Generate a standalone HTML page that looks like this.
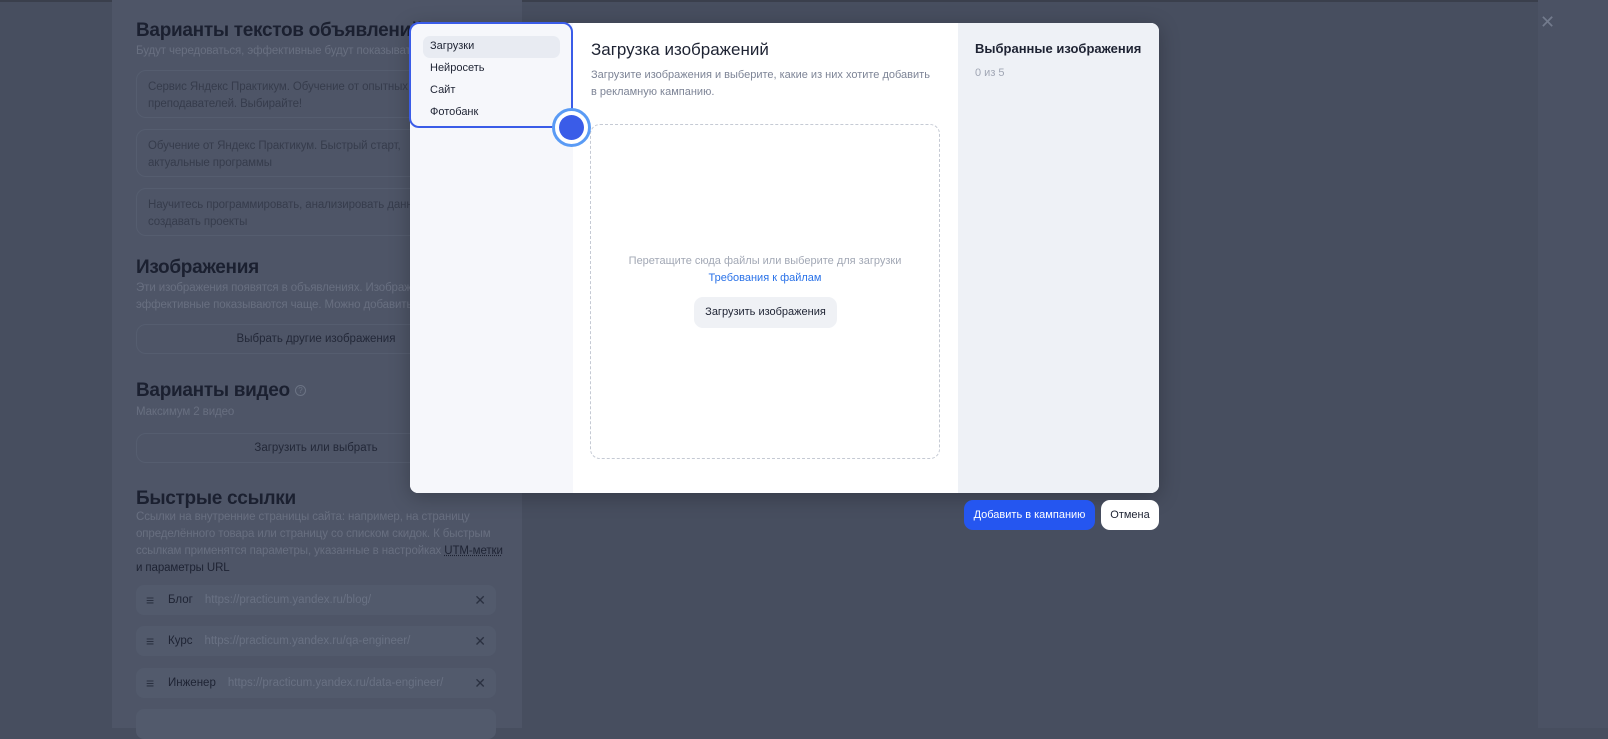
<!DOCTYPE html>
<html><head><meta charset="utf-8"><style>
*{box-sizing:border-box;margin:0;padding:0}
body{width:1608px;height:728px;overflow:hidden;background:#474e5f;font-family:"Liberation Sans",sans-serif;position:relative}
.abs{position:absolute}
.topline{left:0;top:0;width:1608px;height:2px;background:#3a3f4c}
.form{left:112px;top:0;width:410px;height:728px;background:#4e5567}
.rstrip{left:1538px;top:0;width:70px;height:728px;background:#4b5264}
.h{color:#1b2030;font-size:19px;font-weight:bold;letter-spacing:-.3px;white-space:nowrap}
.sub{color:#686f80;font-size:11.5px;line-height:17px;letter-spacing:-.1px}
.card{border:1px solid #555d6f;border-radius:10px;color:#363c4c;font-size:11.5px;line-height:17px;padding:8px 11px;background:#4e5567;letter-spacing:-.1px}
.btn{border:1px solid #555d6f;border-radius:10px;color:#232838;font-size:11.5px;text-align:center;background:#4e5567}
.link{background:#525a6c;border-radius:8px;height:30px;font-size:11.5px;display:flex;align-items:center}
.link .m{color:#2a3040;width:12px;margin:0 10px 0 10px;font-size:14px}
.link b{color:#1e2333;font-weight:normal;margin-right:12px}
.link span{color:#697183}
.link i{position:absolute;right:10px;color:#2a3040;font-style:normal;font-size:14px}
.modal{left:410px;top:23px;width:749px;height:470px;border-radius:8px;overflow:hidden;background:#fff;box-shadow:0 4px 20px rgba(0,0,0,.25)}
</style></head><body>
<div class="abs topline"></div>
<div class="abs form"></div>
<div class="abs rstrip"></div>
<div class="abs" style="left:1540px;top:12px;color:#737b8d;font-size:18px">✕</div>

<div class="abs h" style="left:136px;top:20px">Варианты текстов объявлений <span style="color:#7a3040">*</span> <span style="color:#6b7384;font-weight:normal;border:1px solid #6b7384;border-radius:50%;display:inline-block;width:11px;height:11px;line-height:9px;text-align:center;font-size:8px;vertical-align:middle">?</span></div>
<div class="abs sub" style="left:136px;top:43px;white-space:nowrap">Будут чередоваться, эффективные будут показываться чаще</div>
<div class="abs card" style="left:136px;top:70px;width:330px;height:48px">Сервис Яндекс Практикум. Обучение от опытных<br>преподавателей. Выбирайте!</div>
<div class="abs card" style="left:136px;top:129px;width:330px;height:48px">Обучение от Яндекс Практикум. Быстрый старт,<br>актуальные программы</div>
<div class="abs card" style="left:136px;top:188px;width:330px;height:48px;white-space:nowrap">Научитесь программировать, анализировать данные и<br>создавать проекты</div>
<div class="abs h" style="left:136px;top:257px">Изображения</div>
<div class="abs sub" style="left:136px;top:280px;white-space:nowrap">Эти изображения появятся в объявлениях. Изображения<br>эффективные показываются чаще. Можно добавить до 5</div>
<div class="abs btn" style="left:136px;top:324px;width:360px;height:30px;line-height:28px">Выбрать другие изображения</div>
<div class="abs h" style="left:136px;top:380px">Варианты видео <span style="color:#6b7384;font-weight:normal;border:1px solid #6b7384;border-radius:50%;display:inline-block;width:11px;height:11px;line-height:9px;text-align:center;font-size:8px;vertical-align:middle">?</span></div>
<div class="abs sub" style="left:136px;top:404px">Максимум 2 видео</div>
<div class="abs btn" style="left:136px;top:433px;width:360px;height:30px;line-height:28px">Загрузить или выбрать</div>
<div class="abs h" style="left:136px;top:488px">Быстрые ссылки</div>
<div class="abs sub" style="left:136px;top:509px;white-space:nowrap">Ссылки на внутренние страницы сайта: например, на страницу<br>определённого товара или страницу со списком скидок. К быстрым<br>ссылкам применятся параметры, указанные в настройках <u style="color:#1e2333;text-decoration:underline dotted">UTM-метки</u><br><span style="color:#1e2333">и параметры URL</span></div>
<div class="abs link" style="left:136px;top:585px;width:360px"><span class="m">≡</span><b>Блог</b><span>https://practicum.yandex.ru/blog/</span><i>✕</i></div>
<div class="abs link" style="left:136px;top:626px;width:360px"><span class="m">≡</span><b>Курс</b><span>https://practicum.yandex.ru/qa-engineer/</span><i>✕</i></div>
<div class="abs link" style="left:136px;top:668px;width:360px"><span class="m">≡</span><b>Инженер</b><span>https://practicum.yandex.ru/data-engineer/</span><i>✕</i></div>
<div class="abs link" style="left:136px;top:709px;width:360px"></div>

<div class="abs modal">
  <div class="abs" style="left:0;top:0;width:163px;height:470px;background:#f6f7fb"></div>
  <div class="abs" style="left:548px;top:0;width:201px;height:470px;background:#eef1f6"></div>
  <div class="abs" style="left:13px;top:13px;width:137px;height:22px;border-radius:7px;background:#e8ebf2"></div>
  <div class="abs" style="left:20px;top:17px;font-size:11px;color:#1e2333">Загрузки</div>
  <div class="abs" style="left:20px;top:39px;font-size:11px;color:#1e2333">Нейросеть</div>
  <div class="abs" style="left:20px;top:61px;font-size:11px;color:#1e2333">Сайт</div>
  <div class="abs" style="left:20px;top:83px;font-size:11px;color:#1e2333">Фотобанк</div>
  <div class="abs" style="left:181px;top:17px;font-size:17px;color:#1e2333">Загрузка изображений</div>
  <div class="abs" style="left:181px;top:44px;white-space:nowrap;font-size:11px;line-height:17px;color:#7d8496">Загрузите изображения и выберите, какие из них хотите добавить<br>в рекламную кампанию.</div>
  <div class="abs" style="left:180px;top:101px;width:350px;height:335px;border:1px dashed #c5cad4;border-radius:10px"></div>
  <div class="abs" style="left:180px;top:232px;width:350px;text-align:center;font-size:11px;color:#a2a8b5">Перетащите сюда файлы или выберите для загрузки</div>
  <div class="abs" style="left:180px;top:249px;width:350px;text-align:center;font-size:11px;color:#2a72e8">Требования к файлам</div>
  <div class="abs" style="left:284px;top:274px;width:143px;height:31px;border-radius:9px;background:#eff1f5;text-align:center;line-height:31px;font-size:11px;color:#1e2333">Загрузить изображения</div>
  <div class="abs" style="left:565px;top:18px;font-size:13px;font-weight:bold;color:#1e2333">Выбранные изображения</div>
  <div class="abs" style="left:565px;top:44px;font-size:11px;color:#a0a6b4">0 из 5</div>
</div>
<div class="abs" style="left:409px;top:22px;width:164px;height:106px;border:2px solid #3a5ce8;border-radius:10px"></div>
<div class="abs" style="left:552px;top:108px;width:39px;height:39px;border-radius:50%;background:#fff;border:3px solid #5a9bf5"></div>
<div class="abs" style="left:559px;top:115px;width:25px;height:25px;border-radius:50%;background:#3a5ce8"></div>

<div class="abs" style="left:964px;top:500px;width:131px;height:30px;border-radius:9px;background:#2556f0;color:#fff;font-size:11px;text-align:center;line-height:30px">Добавить в кампанию</div>
<div class="abs" style="left:1101px;top:500px;width:58px;height:30px;border-radius:9px;background:#fff;color:#1e2333;font-size:11px;text-align:center;line-height:30px">Отмена</div>
</body></html>
